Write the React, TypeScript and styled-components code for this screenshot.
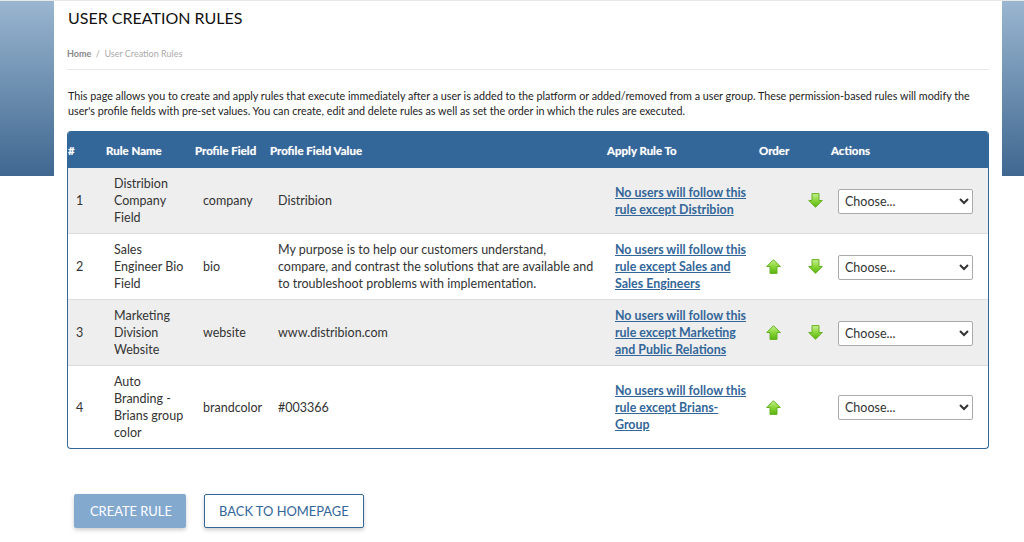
import React from 'react';
import styled, { createGlobalStyle } from 'styled-components';

interface RuleType {
  id: number;
  name: string;
  field: string;
  value: string;
  applyTo: string;
  up: boolean;
  down: boolean;
}

const rules: RuleType[] = [
  { id: 1, name: 'Distribion Company Field', field: 'company', value: 'Distribion', applyTo: 'No users will follow this rule except Distribion', up: false, down: true },
  { id: 2, name: 'Sales Engineer Bio Field', field: 'bio', value: 'My purpose is to help our customers understand, compare, and contrast the solutions that are available and to troubleshoot problems with implementation.', applyTo: 'No users will follow this rule except Sales and Sales Engineers', up: true, down: true },
  { id: 3, name: 'Marketing Division Website', field: 'website', value: 'www.distribion.com', applyTo: 'No users will follow this rule except Marketing and Public Relations', up: true, down: true },
  { id: 4, name: 'Auto Branding - Brians group color', field: 'brandcolor', value: '#003366', applyTo: 'No users will follow this rule except Brians-Group', up: true, down: false },
];

const Arrow = ({ direction }: { direction: 'up' | 'down' }) => (
  <ArrowIcon viewBox="0 0 15 15" $direction={direction}>
    <defs>
      <linearGradient id={`arrow-${direction}`} x1="0" y1={direction === 'up' ? 0 : 1} x2="0" y2={direction === 'up' ? 1 : 0}>
        <stop offset="0" stopColor="#c8f090" />
        <stop offset="0.5" stopColor="#8bd63a" />
        <stop offset="1" stopColor="#57b30f" />
      </linearGradient>
    </defs>
    <path d="M7.5 .7 14.3 7.5H11V14.4H4V7.5H.7Z" fill={`url(#arrow-${direction})`} stroke="#66b224" strokeWidth="1" />
  </ArrowIcon>
);

function App() {
  return (
    <Page>
      <GlobalStyle />
      <Content>
        <Title>USER CREATION RULES</Title>
        <Breadcrumb>
          <strong>Home</strong>
          <span>/</span>
          <span>User Creation Rules</span>
        </Breadcrumb>
        <Intro>
          This page allows you to create and apply rules that execute immediately after a user is added to the platform or added/removed from a user group. These permission-based rules will modify the user's profile fields with pre-set values. You can create, edit and delete rules as well as set the order in which the rules are executed.
        </Intro>
        <TableWrap>
          <Table>
            <colgroup>
              <col style={{ width: 38 }} />
              <col style={{ width: 89 }} />
              <col style={{ width: 75 }} />
              <col style={{ width: 337 }} />
              <col style={{ width: 152 }} />
              <col style={{ width: 42 }} />
              <col style={{ width: 30 }} />
              <col />
            </colgroup>
            <thead>
              <tr>
                <Th>#</Th>
                <Th>Rule Name</Th>
                <Th>Profile Field</Th>
                <Th>Profile Field Value</Th>
                <Th>Apply Rule To</Th>
                <Th colSpan={2}>Order</Th>
                <Th>Actions</Th>
              </tr>
            </thead>
            <tbody>
              {rules.map((rule) => (
                <Row key={rule.id}>
                  <Td>{rule.id}</Td>
                  <Td>{rule.name}</Td>
                  <Td>{rule.field}</Td>
                  <Td>{rule.value}</Td>
                  <Td>
                    <RuleLink href="#">{rule.applyTo}</RuleLink>
                  </Td>
                  <ArrowCell>{rule.up && <Arrow direction="up" />}</ArrowCell>
                  <ArrowCell>{rule.down && <Arrow direction="down" />}</ArrowCell>
                  <ActionCell>
                    <Select defaultValue="">
                      <option value="">Choose...</option>
                    </Select>
                  </ActionCell>
                </Row>
              ))}
            </tbody>
          </Table>
        </TableWrap>
        <Buttons>
          <CreateButton>CREATE RULE</CreateButton>
          <BackButton>BACK TO HOMEPAGE</BackButton>
        </Buttons>
      </Content>
    </Page>
  );
}
export default App;

const GlobalStyle = createGlobalStyle`
  html, body {
    margin: 0;
    padding: 0;
    background: #fff;
  }
  body {
    font-family: Lato, "Liberation Sans", sans-serif;
    overflow: hidden;
  }
`;

const Page = styled.div`
  height: 542px;
  box-sizing: border-box;
  border-top: 1px solid #e7e7e7;
  padding: 0 22px 0 54px;
  background: linear-gradient(to bottom, #9ab6d0, #3f6790) no-repeat 0 0 / 100% 175px;
`;

const Content = styled.div`
  height: 100%;
  box-sizing: border-box;
  background: #fff;
  padding: 0 13px 0 14px;
`;

const Title = styled.h1`
  margin: 0;
  padding-top: 7px;
  font-size: 16px;
  line-height: 19px;
  font-weight: 400;
  color: #111;
`;

const Breadcrumb = styled.div`
  display: flex;
  gap: 4.5px;
  margin-top: 19px;
  margin-left: -1px;
  padding-bottom: 8px;
  border-bottom: 1px solid #e8e8e8;
  font-size: 9px;
  line-height: 15px;
  color: #aaa;

  strong {
    color: #888;
  }
`;

const Intro = styled.p`
  margin: 18px 0 13px;
  font-size: 10.78px;
  line-height: 15px;
  color: #222;
`;

const TableWrap = styled.div`
  border: 1px solid #336699;
  border-top: 0;
  border-radius: 4px;
  overflow: hidden;
  margin-left: -1px;
`;

const Table = styled.table`
  width: 100%;
  table-layout: fixed;
  border-collapse: collapse;
`;

const Th = styled.th`
  height: 35px;
  padding: 2px 0 0;
  background: #336699;
  color: #fff;
  font-size: 11.5px;
  font-weight: 700;
  text-align: left;
  text-shadow: 0 0 1px rgba(255, 255, 255, 0.6);
`;

const Row = styled.tr`
  border-bottom: 1px solid #ddd;

  &:nth-child(odd) {
    background: #eee;
  }

  &:last-child {
    border-bottom: 0;
  }
`;

const Td = styled.td`
  padding: 7px 8px;
  font-size: 12.5px;
  line-height: 17px;
  color: #333;
`;

const RuleLink = styled.a`
  color: #336699;
  font-weight: 700;
  font-size: 12.4px;
`;

const ArrowCell = styled.td`
  padding: 0;
  text-align: left;
  vertical-align: middle;
`;

const ArrowIcon = styled.svg<{ $direction: 'up' | 'down' }>`
  display: block;
  width: 15px;
  height: 15px;
  margin-left: 7px;
  transform: ${(props) => (props.$direction === 'down' ? 'rotate(180deg)' : 'none')};
`;

const ActionCell = styled.td`
  padding: 1px 15px 0 7px;
`;

const Select = styled.select`
  display: block;
  width: 135px;
  height: 25px;
  padding: 0 2px;
  border: 1px solid #aaa;
  border-radius: 2px;
  background: #fff;
  font-family: Lato, "Liberation Sans", sans-serif;
  font-size: 12.5px;
  color: #333;
`;

const Buttons = styled.div`
  display: flex;
  gap: 18px;
  margin: 45px 0 0 6px;
`;

const CreateButton = styled.button`
  height: 34px;
  padding: 0 14px 0 16px;
  border: 0;
  border-radius: 2px;
  background: #84a9cf;
  color: #fff;
  font-family: Lato, "Liberation Sans", sans-serif;
  font-size: 12.9px;
  white-space: nowrap;
  box-shadow: 0 2px 4px rgba(0, 0, 0, 0.2);
`;

const BackButton = styled(CreateButton)`
  width: 160px;
  padding: 0;
  border: 1px solid #336699;
  background: #fff;
  color: #336699;
`;
